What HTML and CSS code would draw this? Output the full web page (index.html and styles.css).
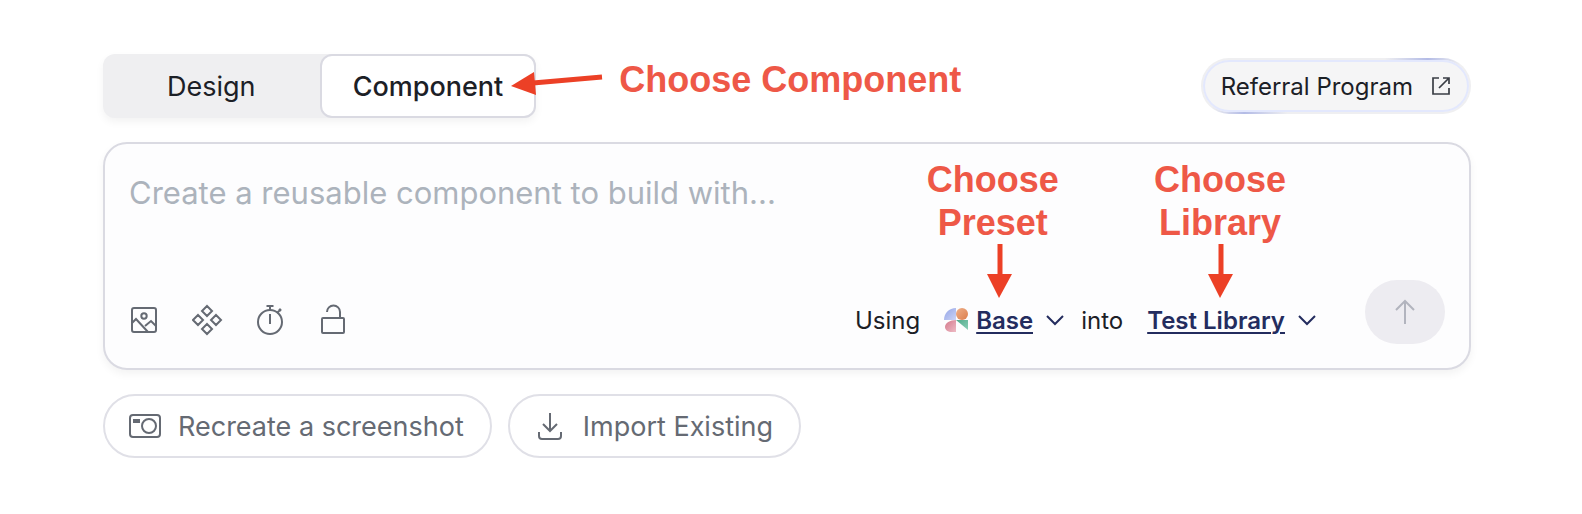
FILE: index.html
```html
<!DOCTYPE html>
<html lang="en">
<head>
    <meta charset="UTF-8">
    <meta name="viewport" content="width=device-width, initial-scale=1.0">
    <title>Create a component</title>
    <link rel="stylesheet" href="styles.css">
</head>
<body>
    <main class="page">
        <div class="topbar">
            <div class="tabs-wrap">
                <div class="tabs" role="tablist">
                    <button type="button" class="tab" role="tab" aria-selected="false">Design</button>
                    <button type="button" class="tab active" role="tab" aria-selected="true">Component</button>
                </div>
                <div class="note note-side">
                    <svg width="92" height="26" viewBox="0 0 92 26">
                        <path d="M91 7 L22 13" stroke="#ec4026" stroke-width="5"/>
                        <path d="M0 16 L23 2 L25 25 Z" fill="#ec4026"/>
                    </svg>
                    <span>Choose Component</span>
                </div>
            </div>
            <a href="#" class="referral">
                Referral Program
                <svg width="20" height="20" viewBox="0 0 20 20" fill="none" stroke="#3a3e45" stroke-width="1.7">
                    <path d="M8 2H2v16h16v-6M12 2h6v6M18 2L8 12"/>
                </svg>
            </a>
        </div>

        <form class="prompt">
            <textarea class="prompt-text" aria-label="Prompt" placeholder="Create a reusable component to build with..."></textarea>
            <div class="prompt-bar">
                <div class="tools">
                    <button type="button" class="tool" aria-label="Add image">
                        <svg width="32" height="32" viewBox="0 0 32 32">
                            <rect x="3" y="4" width="24" height="24" rx="2"/>
                            <circle cx="15" cy="12" r="2.7"/>
                            <path d="M3 19l4-4 12 13M16 22l6-5 5 5"/>
                        </svg>
                    </button>
                    <button type="button" class="tool" aria-label="Components">
                        <svg width="32" height="32" viewBox="0 0 32 32">
                            <path d="M15 2l5 5-5 5-5-5zM6 11l5 5-5 5-5-5zM24 11l5 5-5 5-5-5zM15 20l5 5-5 5-5-5z"/>
                        </svg>
                    </button>
                    <button type="button" class="tool" aria-label="Timer">
                        <svg width="32" height="32" viewBox="0 0 32 32">
                            <circle cx="15" cy="18" r="12"/>
                            <path d="M11.500 2h7M15 2v4M15 10v10M22 9l4-4M24 5l2 2"/>
                        </svg>
                    </button>
                    <button type="button" class="tool" aria-label="Visibility">
                        <svg width="32" height="32" viewBox="0 0 32 32">
                            <rect x="4" y="14" width="22" height="15" rx="1"/>
                            <path d="M9 8a6.500 6.500 0 0 1 13 0v6"/>
                        </svg>
                    </button>
                </div>

                <div class="target">
                    <label for="preset">Using</label>
                    <div class="picker picker-preset">
                        <svg width="24" height="24" viewBox="0 0 24 24">
                            <defs>
                                <linearGradient id="blue" x2="1" y2="1"><stop stop-color="#93a4e6"/><stop offset="1" stop-color="#ccd4f6"/></linearGradient>
                                <linearGradient id="orange" x2="1" y2="1"><stop stop-color="#efb08a"/><stop offset="1" stop-color="#dc7d4b"/></linearGradient>
                                <linearGradient id="pink" x2="1" y2="1"><stop stop-color="#d3788b"/><stop offset="1" stop-color="#eebbc5"/></linearGradient>
                                <linearGradient id="green" x2="1" y2="1"><stop stop-color="#4fa98a"/><stop offset="1" stop-color="#8cd0b8"/></linearGradient>
                            </defs>
                            <path d="M12 0v12H0C0 5 5 0 12 0z" fill="url(#blue)"/>
                            <circle cx="18" cy="6" r="6" fill="url(#orange)"/>
                            <path d="M12 12v12H8c-4 0-7-2-7-5 0-4 5-7 11-7z" fill="url(#pink)"/>
                            <path d="M12 12h12v10z" fill="url(#green)"/>
                        </svg>
                        <select id="preset">
                            <option>Base</option>
                        </select>
                        <svg class="chevron" width="20" height="12" viewBox="0 0 20 12">
                            <path d="M2 2l8 8 8-8"/>
                        </svg>
                        <div class="note note-down">
                            <span>Choose Preset</span>
                            <svg width="38" height="54" viewBox="0 0 38 54">
                                <path d="M26 0v32" stroke="#ec4026" stroke-width="5"/>
                                <path d="M13 30h25L25 54z" fill="#ec4026"/>
                            </svg>
                        </div>
                    </div>
                    <label for="library">into</label>
                    <div class="picker picker-library">
                        <select id="library">
                            <option>Test Library</option>
                        </select>
                        <svg class="chevron" width="20" height="12" viewBox="0 0 20 12">
                            <path d="M2 2l8 8 8-8"/>
                        </svg>
                        <div class="note note-down">
                            <span>Choose Library</span>
                            <svg width="26" height="54" viewBox="0 0 26 54">
                                <path d="M14 0v32" stroke="#ec4026" stroke-width="5"/>
                                <path d="M1 30h25L13 54z" fill="#ec4026"/>
                            </svg>
                        </div>
                    </div>
                </div>

                <button type="submit" class="send" aria-label="Send">
                    <svg width="24" height="28" viewBox="0 0 24 28">
                        <path d="M12 26V3M3 12l9-9 9 9"/>
                    </svg>
                </button>
            </div>
        </form>

        <div class="actions">
            <button type="button" class="action">
                <svg width="32" height="32" viewBox="0 0 32 32">
                    <rect x="1" y="5" width="30" height="22" rx="3"/>
                    <circle cx="20" cy="16" r="7"/>
                    <path class="solid" d="M4 9h7v4H4z"/>
                </svg>
                Recreate a screenshot
            </button>
            <button type="button" class="action">
                <svg width="32" height="32" viewBox="0 0 32 32">
                    <path d="M16 3v18M9 14l7 7 7-7M5 22v4a3 3 0 0 0 3 3h16a3 3 0 0 0 3-3v-4"/>
                </svg>
                Import Existing
            </button>
        </div>
    </main>
</body>
</html>
```

FILE: styles.css
```css
* {
    box-sizing: border-box;
}
body {
    font-family: Inter, sans-serif;
    background-color: #ffffff;
    color: #1c2026;
    margin: 0;
}
button, select, textarea {
    font: inherit;
    color: inherit;
    margin: 0;
    padding: 0;
    border: 0;
    background: none;
}
button {
    cursor: pointer;
}
svg {
    display: block;
    flex: none;
}
.page {
    padding: 54px 111px 56px 103px;
    display: flex;
    flex-direction: column;
    gap: 24px;
}
.topbar {
    display: flex;
    justify-content: space-between;
    align-items: center;
}
.tabs-wrap {
    position: relative;
}
.tabs {
    display: grid;
    grid-template-columns: 1fr 1fr;
    background-color: #efeff1;
    border-radius: 12px;
    box-shadow: 0 4px 8px rgba(0, 0, 0, 0.05);
}
.tab {
    height: 64px;
    padding: 0 31px;
    border: 2px solid transparent;
    border-radius: 12px;
    font-size: 27px;
}
.tab.active {
    background-color: #ffffff;
    border-color: #dadae2;
    font-weight: 500;
}
.referral {
    display: flex;
    align-items: center;
    gap: 18px;
    height: 56px;
    padding: 0 18px;
    border: 2px solid transparent;
    border-radius: 28px;
    background: linear-gradient(#f5f5f6, #f5f5f6) padding-box,
        linear-gradient(90deg, #efeff1 68%, #b3bbe6 84%, #efeff1 96%) top / 100% 50% no-repeat border-box,
        linear-gradient(270deg, #efeff1 68%, #b3bbe6 84%, #efeff1 96%) bottom / 100% 50% no-repeat border-box;
    box-shadow: inset 0 0 0 2px #e3e8fd;
    color: #1c2026;
    font-size: 24px;
    text-decoration: none;
}
.prompt {
    border: 2px solid #dadae2;
    border-radius: 24px;
    background-color: #fdfdfe;
    padding: 24px;
    box-shadow: 0 4px 8px rgba(0, 0, 0, 0.05);
}
.prompt-text {
    display: block;
    width: 100%;
    height: 112px;
    font-size: 31px;
    line-height: 50px;
    resize: none;
    outline: none;
}
.prompt-text::placeholder {
    color: #acb3bc;
    opacity: 1;
}
.prompt-bar {
    display: flex;
    align-items: flex-end;
}
.tools {
    display: flex;
    gap: 31px;
    height: 48px;
    align-items: center;
    flex: 1;
}
.tool svg, .action svg {
    fill: none;
    stroke: #656a73;
    stroke-width: 2;
}
.target {
    display: flex;
    align-items: center;
    height: 48px;
    font-size: 24px;
}
.picker {
    position: relative;
    display: flex;
    align-items: center;
}
.picker-preset {
    gap: 8px;
    margin: 0 16px 0 24px;
}
.picker-library {
    gap: 8px;
    margin: 0 48px 0 24px;
}
.picker select {
    appearance: none;
    field-sizing: content;
    color: #232c5e;
    font-weight: 600;
    text-decoration: underline;
    text-decoration-thickness: 2px;
    text-underline-offset: 3px;
}
.chevron {
    margin-left: 4px;
    fill: none;
    stroke: #232c5e;
    stroke-width: 2;
}
.send {
    display: grid;
    place-items: center;
    width: 80px;
    height: 64px;
    border-radius: 32px;
    background-color: #edecf1;
}
.send svg {
    fill: none;
    stroke: #b2b4be;
    stroke-width: 2;
}
.actions {
    display: flex;
    gap: 16px;
}
.action {
    display: flex;
    align-items: center;
    gap: 17px;
    height: 64px;
    padding: 0 26px 0 24px;
    border: 2px solid #e0e0e7;
    border-radius: 32px;
    color: #656a73;
    font-size: 27px;
}
.action .solid {
    fill: #656a73;
    stroke: none;
}

/* red callouts drawn over the form */
.note {
    position: absolute;
    display: flex;
    color: #ee5847;
    font-family: "Liberation Sans", Arial, sans-serif;
    font-size: 36px;
    font-weight: bold;
    line-height: 43px;
    pointer-events: none;
}
.note-side {
    left: 100%;
    top: 4px;
    margin-left: -25px;
    gap: 16px;
    white-space: nowrap;
}
.note-side svg {
    margin-top: 12px;
}
.note-down {
    flex-direction: column;
    align-items: center;
    width: 140px;
    left: 50%;
    bottom: 100%;
    margin-left: -82px;
    margin-bottom: 8px;
    text-align: center;
}
```
